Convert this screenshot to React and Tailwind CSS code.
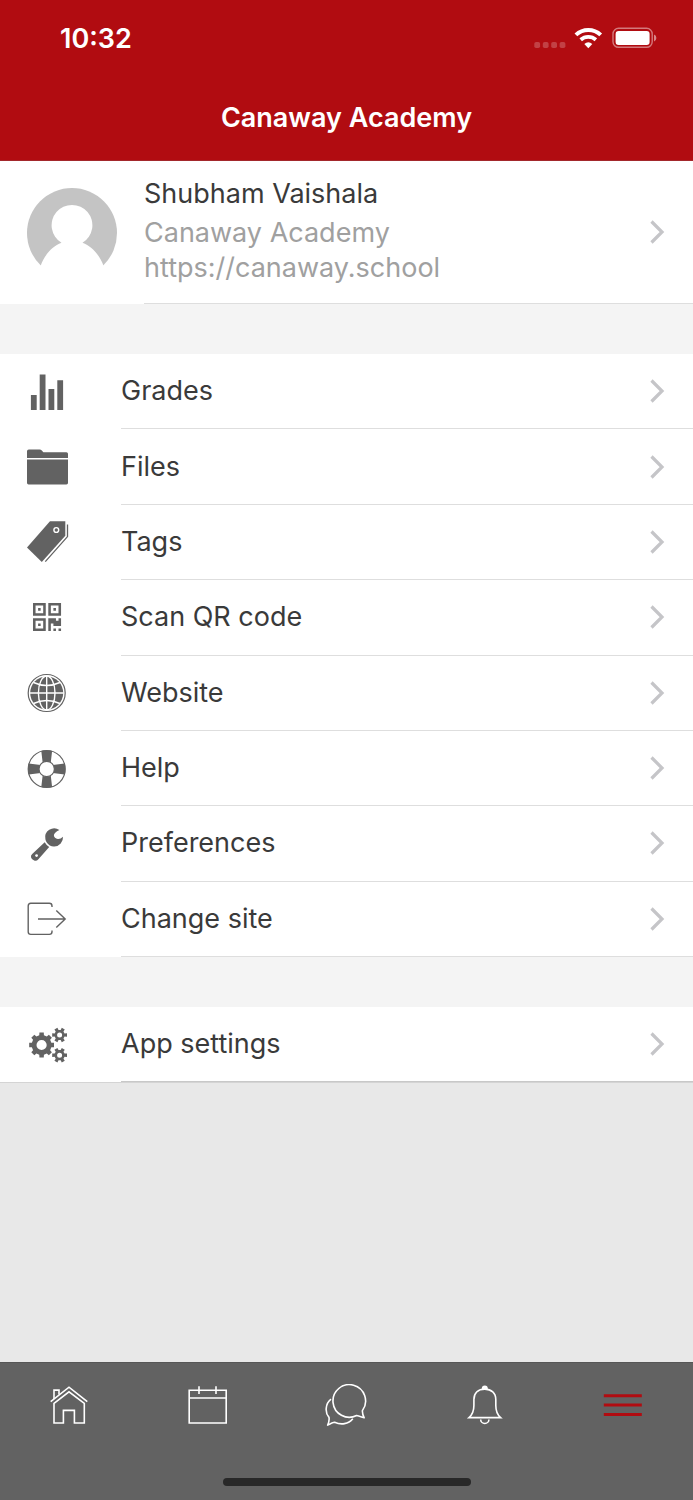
import React from 'react';

const ROW_ICON = 'w-[42px] h-[42px] shrink-0 text-[#626262]';
const TAB_ICON = 'w-[42px] h-[42px]';

// Outline of a cog wheel with flat teeth, centred on cx/cy
function cogPath(cx, cy, outer, inner, hole, teeth) {
  const step = (Math.PI * 2) / teeth;
  const points = [];
  for (let i = 0; i < teeth; i++) {
    const a = i * step;
    [[inner, -0.3], [outer, -0.22], [outer, 0.22], [inner, 0.3]].forEach(([r, k]) => {
      const x = cx + r * Math.cos(a + k * step);
      const y = cy + r * Math.sin(a + k * step);
      points.push(`${x.toFixed(2)} ${y.toFixed(2)}`);
    });
  }
  return `M${points.join('L')}ZM${cx - hole} ${cy}a${hole} ${hole} 0 1 0 ${hole * 2} 0a${hole} ${hole} 0 1 0 ${-hole * 2} 0Z`;
}

function GradesIcon() {
  return (
    <svg viewBox="0 0 42 42" className={ROW_ICON} fill="currentColor" aria-hidden="true">
      <path d="M3.9 24h5.8v15H3.9zM12.7 3.4h5.8V39h-5.8zM21.5 18h5.8v21h-5.8zM30.3 9.3h5.8V39h-5.8z" />
    </svg>
  );
}

function FilesIcon() {
  return (
    <svg viewBox="0 0 42 42" className={ROW_ICON} fill="currentColor" aria-hidden="true">
      <path d="M0 12.1V5.2Q0 3.4 1.8 3.4H12.6Q14 3.4 14.8 4.6L16.4 6.2H39.4Q41 6.2 41 7.8V12.1Z" />
      <path d="M0 13.6H41V36.8Q41 38.4 39.4 38.4H1.6Q0 38.4 0 36.8Z" />
    </svg>
  );
}

function TagsIcon() {
  return (
    <svg viewBox="0 0 42 42" className={ROW_ICON} fill="currentColor" aria-hidden="true">
      <path d="M0 26.4L23 .2H38.3V14.8L14.8 41Z" />
      <circle cx="29.3" cy="9" r="2.4" fill="none" stroke="white" strokeWidth="1.4" />
      <path d="M40.5 3.4V15.6L18.3 40.6" fill="none" stroke="currentColor" strokeWidth="1.3" />
    </svg>
  );
}

function QrIcon() {
  return (
    <svg viewBox="0 0 42 42" className={ROW_ICON} fill="currentColor" aria-hidden="true">
      <g transform="translate(6 6) scale(2.55)">
        <path
          fillRule="evenodd"
          d="M0 0h5v5H0zM1 1v3h3V1zM2 2h1v1H2zM6 0h5v5H6zM7 1v3h3V1zM8 2h1v1H8zM0 6h5v5H0zM1 7v3h3V7zM2 8h1v1H2z"
        />
        <path d="M6 6H9V7H10V6H11V9H8V8H7V11H6ZM8 10H9V11H8ZM10 10H11V11H10Z" />
      </g>
    </svg>
  );
}

function WebsiteIcon() {
  return (
    <svg viewBox="0 0 42 42" className={ROW_ICON} fill="none" aria-hidden="true">
      <circle cx="19.7" cy="21" r="18.5" stroke="currentColor" strokeWidth="1.2" />
      <circle cx="19.7" cy="21" r="16.5" fill="currentColor" />
      <g stroke="white" strokeWidth="1.4">
        <path d="M19.7 4V38M2.7 21H36.7" />
        <ellipse cx="19.7" cy="21" rx="8.3" ry="17" />
        <path d="M6.5 10.5Q19.7 16.5 32.9 10.5M6.5 31.5Q19.7 25.5 32.9 31.5" />
      </g>
    </svg>
  );
}

function HelpIcon() {
  return (
    <svg viewBox="0 0 42 42" className={ROW_ICON} fill="currentColor" aria-hidden="true">
      <path d="M14.3 3L17 2.4H22.4L25.1 3L23.7 15H15.7ZM14.3 39L17 39.6H22.4L25.1 39L23.7 27H15.7Z" />
      <path d="M1.7 15.6L1.1 18.3V23.7L1.7 26.4L13.7 25V17ZM37.7 15.6L38.3 18.3V23.7L37.7 26.4L25.7 25V17Z" />
      <circle cx="19.7" cy="21" r="18.5" fill="none" stroke="currentColor" strokeWidth="1.2" />
      <circle cx="19.7" cy="21" r="7.7" fill="white" stroke="currentColor" strokeWidth="1.2" />
    </svg>
  );
}

function PreferencesIcon() {
  return (
    <svg viewBox="0 0 42 42" className={ROW_ICON} fill="currentColor" aria-hidden="true">
      <path d="M32.4 7A9 9 0 0 0 18.4 16.2Q18.7 17.6 19.6 19.2Q20.9 21 22.8 22.4Q25 23.6 27.4 23.4A9 9 0 0 0 36 13.8Q33.6 16.2 30.8 16Q27.2 15.6 26.9 12.6Q26.9 9.6 32.4 7Z" />
      <path d="M17.7 19.3Q19.3 22.3 22.2 23.9L11.4 36.2Q9.5 38.5 7.2 37.6Q4.6 36.6 4 34.2Q3.6 32.2 5.2 30.9Z" />
      <circle cx="9.6" cy="32.6" r="1.4" fill="white" />
    </svg>
  );
}

function ChangeSiteIcon() {
  return (
    <svg viewBox="0 0 42 42" className={ROW_ICON} fill="none" stroke="currentColor" strokeWidth="1.4" aria-hidden="true">
      <path d="M25 9V8Q25 5.3 22.3 5.3H3.8Q1.2 5.3 1.2 8V33.8Q1.2 36.4 3.8 36.4H22.3Q25 36.4 25 33.8V32.6" />
      <path d="M11 21H38.2M29.3 12.4L38.2 21L29.3 29.6" />
    </svg>
  );
}

function SettingsIcon() {
  return (
    <svg viewBox="0 0 42 42" className={ROW_ICON} fill="currentColor" fillRule="evenodd" aria-hidden="true">
      <path d={cogPath(14.6, 21, 12.6, 10, 5.1, 8)} />
      <path d={cogPath(32.6, 11, 7.6, 5.2, 2.5, 6)} />
      <path d={cogPath(32.6, 31.2, 7.6, 5.2, 2.5, 6)} />
    </svg>
  );
}

function Chevron() {
  return (
    <svg viewBox="0 0 16 24" className="w-4 h-6 shrink-0" fill="none" stroke="#c5c5c8" strokeWidth="3.2" aria-hidden="true">
      <path d="M2.5 1.5L13 12L2.5 22.5" />
    </svg>
  );
}

function HomeIcon() {
  return (
    <svg viewBox="0 0 42 42" className={TAB_ICON} fill="none" stroke="currentColor" strokeWidth="1.6" aria-hidden="true">
      <path d="M2.7 17.7L21 3.2L39.3 17.7" />
      <path d="M6 19.4L21 7.8L36.3 19.4V39H26.4V26.4H15.4V39H6Z" />
      <path d="M6 15V6.1H11V10.6" />
    </svg>
  );
}

function CalendarIcon() {
  return (
    <svg viewBox="0 0 42 42" className={TAB_ICON} fill="none" stroke="currentColor" strokeWidth="1.6" aria-hidden="true">
      <path d="M2.2 6.2H39.2V39H2.2ZM2.2 14H39.2M12 2.3V10M29 2.3V10" />
    </svg>
  );
}

function MessagesIcon() {
  return (
    <svg viewBox="0 0 42 42" className={TAB_ICON} fill="none" stroke="currentColor" strokeWidth="1.6" strokeLinejoin="round" aria-hidden="true">
      <path d="M37.4 26.6A16.3 16.3 0 1 0 31.6 31.5Q33.4 31.8 39.2 33.8Q37.2 29.6 37.4 26.6Z" />
      <path d="M6 15.2C.4 19.6-.4 28.4 4 33.4Q4.6 36.6 2.7 41.1Q7.6 38.4 9.6 38.2C16 41.2 23.4 40.2 27.8 34.8" />
    </svg>
  );
}

function BellIcon() {
  return (
    <svg viewBox="0 0 42 42" className={TAB_ICON} fill="none" stroke="currentColor" strokeWidth="1.6" aria-hidden="true">
      <path d="M5 33.6H36.6C33.2 30.8 31.8 27.4 31.8 21.6V15.6C31.8 9 27.4 5.1 20.8 5.1S9.9 9 9.9 15.6V21.6C9.9 27.4 8.4 30.8 5 33.6Z" />
      <path d="M18.6 4.6A2.2 2.2 0 0 1 23 4.6Z" fill="currentColor" />
      <path d="M16.7 35.4A4.1 4.1 0 0 0 24.9 35.4" />
    </svg>
  );
}

function MenuIcon() {
  return (
    <svg viewBox="0 0 42 42" className={TAB_ICON} stroke="currentColor" strokeWidth="3" aria-hidden="true">
      <path d="M.8 11.7H38.8M.8 21.1H38.8M.8 30.5H38.8" />
    </svg>
  );
}

function StatusBar() {
  return (
    <div className="flex h-[78px] items-center justify-between pl-[60px] pr-9">
      <span className="text-[27px] leading-8 font-semibold">10:32</span>
      <div className="flex items-center gap-2">
        <svg viewBox="0 0 32 20" className="h-5 w-8 overflow-visible" fill="white" fillOpacity="0.22" aria-hidden="true">
          <rect x="-0.7" y="13" width="5.8" height="6" rx="1.8" />
          <rect x="7.8" y="13" width="5.8" height="6" rx="1.8" />
          <rect x="16.2" y="13" width="5.8" height="6" rx="1.8" />
          <rect x="24.6" y="13" width="5.8" height="6" rx="1.8" />
        </svg>
        <svg viewBox="0 0 28 20" className="h-5 w-7 overflow-visible" fill="none" stroke="white" aria-hidden="true">
          <path d="M.9 5.9A18 18 0 0 1 25.700 5.9" strokeWidth="4" />
          <path d="M5.700 10.700A11.500 11.500 0 0 1 20.900 10.700" strokeWidth="3.8" />
          <path d="M13.300 19.200L9.300 15Q13.300 11.400 17.300 15Z" fill="white" stroke="none" />
        </svg>
        <svg viewBox="0 0 46 22" className="h-[22px] w-[46px] overflow-visible" aria-hidden="true">
          <rect x="2" y="0.3" width="39.2" height="19" rx="5.6" fill="none" stroke="white" strokeOpacity="0.45" strokeWidth="1.4" />
          <rect x="4.6" y="2.9" width="34" height="14" rx="3" fill="white" />
          <path d="M43 6.6Q45.4 7.6 45.4 10T43 13.4Z" fill="white" fillOpacity="0.5" />
        </svg>
      </div>
    </div>
  );
}

function MenuRow({ icon: Icon, label, last }) {
  return (
    <li className="flex min-h-[75px]">
      <a href="#" className="flex flex-1 items-stretch pl-[27px]">
        <span className="flex items-center">
          <Icon />
        </span>
        <span className={`ml-[52px] flex flex-1 items-center justify-between border-b pr-7 ${last ? 'border-[#c8c8c8]' : 'border-[#dedede]'}`}>
          <span className="text-[27px] leading-9">{label}</span>
          <Chevron />
        </span>
      </a>
    </li>
  );
}

const menuItems = [
  { label: 'Grades', icon: GradesIcon },
  { label: 'Files', icon: FilesIcon },
  { label: 'Tags', icon: TagsIcon },
  { label: 'Scan QR code', icon: QrIcon },
  { label: 'Website', icon: WebsiteIcon },
  { label: 'Help', icon: HelpIcon },
  { label: 'Preferences', icon: PreferencesIcon },
  { label: 'Change site', icon: ChangeSiteIcon },
];

const tabs = [
  { label: 'Home', icon: HomeIcon },
  { label: 'Calendar', icon: CalendarIcon },
  { label: 'Messages', icon: MessagesIcon },
  { label: 'Notifications', icon: BellIcon },
  { label: 'More', icon: MenuIcon, active: true },
];

export default function App() {
  return (
    <div className="flex min-h-screen flex-col bg-[#e8e8e8] font-['Inter',sans-serif] text-[#3a3a3a]">
      <header className="border-b border-[#a3282c] bg-[#b10c11] text-white">
        <StatusBar />
        <div className="flex h-[82px] items-center justify-center pb-[2px]">
          <h1 className="text-[27px] leading-9 font-semibold">Canaway Academy</h1>
        </div>
      </header>

      <main className="flex-1">
        <a href="#" className="flex bg-white pl-[27px]">
          <span className="flex items-center">
            <svg viewBox="0 0 90 90" className="h-[90px] w-[90px]" aria-hidden="true">
              <circle cx="45" cy="45" r="45" fill="#c4c4c4" />
              <path d="M13.6 78C17 68 24.5 58.5 34.5 54.8A20.4 20.4 0 1 1 55.5 54.8C65.5 58.5 73 68 76.6 78L74 90H16Z" fill="white" />
            </svg>
          </span>
          <span className="ml-[27px] flex flex-1 items-center justify-between border-b border-[#dedede] pr-7">
            <span className="flex flex-col pt-[15px] pb-[18px] text-[27px] leading-[35px]">
              <span className="mb-1">Shubham Vaishala</span>
              <span className="text-[#a0a0a0]">Canaway Academy</span>
              <span className="text-[#a0a0a0]">https://canaway.school</span>
            </span>
            <Chevron />
          </span>
        </a>

        <div className="h-[50px] bg-[#f4f4f4]" />

        <ul className="grid min-h-[603px] auto-rows-fr bg-white">
          {menuItems.map((item) => (
            <MenuRow key={item.label} icon={item.icon} label={item.label} />
          ))}
        </ul>

        <div className="h-[50px] bg-[#f4f4f4]" />

        <ul className="border-b border-[#d4d4d4] bg-white">
          <MenuRow icon={SettingsIcon} label="App settings" last />
        </ul>
      </main>

      <nav className="border-t border-[#565656] bg-[#626262] text-white">
        <div className="grid grid-cols-5 pt-[21px]">
          {tabs.map(({ label, icon: Icon, active }) => (
            <button key={label} type="button" aria-label={label} className={`flex justify-center ${active ? 'text-[#b10c11]' : ''}`}>
              <Icon />
            </button>
          ))}
        </div>
        <div className="mx-auto mt-[52px] mb-[14px] h-2 w-[248px] rounded-full bg-[#282828]" />
      </nav>
    </div>
  );
}
